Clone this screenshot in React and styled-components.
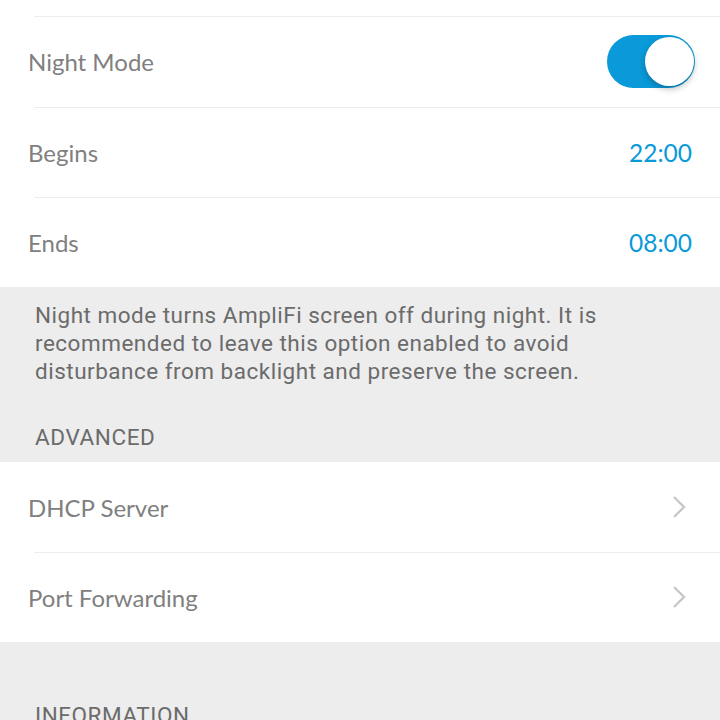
import React from "react";
import styled, { createGlobalStyle } from "styled-components";

const Global = createGlobalStyle`
  body {
    margin: 0;
    background: #ededed;
    font-family: "Lato", "Liberation Sans", sans-serif;
  }
`;

const Page = styled.div`
  width: 720px;
  height: 720px;
  overflow: hidden;
  background: #ededed;
`;

const Group = styled.div`
  background: #fff;
  padding-top: ${(p) => p.$top || 0}px;
`;

const Row = styled.div`
  height: ${(p) => p.$h || 90}px;
  display: flex;
  align-items: center;
  justify-content: space-between;
  padding: 0 ${(p) => p.$pr || 28}px 0 28px;
  box-sizing: border-box;
  position: relative;

  &::before {
    content: "";
    display: ${(p) => (p.$line ? "block" : "none")};
    position: absolute;
    top: 0;
    left: 34px;
    right: 0;
    height: 1px;
    background: #ececec;
  }
`;

const Label = styled.span`
  font-size: 24px;
  color: #808080;
`;

const Value = styled.span`
  font-size: 24.5px;
  color: #0a9ad9;
`;

const Track = styled.div`
  width: 88px;
  height: 53px;
  border-radius: 27px;
  background: #0a9ad9;
  position: relative;
  margin-right: -3px;
`;

const Knob = styled.div`
  position: absolute;
  top: 2px;
  right: 1px;
  width: 49px;
  height: 49px;
  border-radius: 50%;
  background: #fff;
  box-shadow: 0 3px 6px rgba(0, 0, 0, 0.25);
`;

const Note = styled.p`
  margin: 0;
  padding: 14px 40px 0 35px;
  font-family: "Roboto", "Liberation Sans", sans-serif;
  font-size: 22.5px;
  letter-spacing: 0.5px;
  line-height: 28px;
  color: #6b6b6b;
`;

const Header = styled.div`
  padding: 0 35px;
  font-family: "Roboto", "Liberation Sans", sans-serif;
  font-size: 22.5px;
  letter-spacing: 0.6px;
  color: #6b6b6b;
  height: ${(p) => p.$h}px;
  display: flex;
  align-items: flex-end;
  padding-bottom: ${(p) => p.$pb}px;
  box-sizing: border-box;
`;

const Chevron = () => (
  <svg width="14" height="24" viewBox="0 0 14 24">
    <path d="M2 2 L12 12 L2 22" fill="none" stroke="#c7c7cc" strokeWidth="2.4" />
  </svg>
);

export default function App() {
  return (
    <Page>
      <Global />
      <Group $top={16}>
        <Row $line $h={91}>
          <Label>Night Mode</Label>
          <Track>
            <Knob />
          </Track>
        </Row>
        <Row $line>
          <Label>Begins</Label>
          <Value>22:00</Value>
        </Row>
        <Row $line>
          <Label>Ends</Label>
          <Value>08:00</Value>
        </Row>
      </Group>
      <Note>
        Night mode turns AmpliFi screen off during night. It is recommended to leave this option
        enabled to avoid disturbance from backlight and preserve the screen.
      </Note>
      <Header $h={77} $pb={12}>ADVANCED</Header>
      <Group>
        <Row $pr={34}>
          <Label>DHCP Server</Label>
          <Chevron />
        </Row>
        <Row $line $pr={34}>
          <Label>Port Forwarding</Label>
          <Chevron />
        </Row>
      </Group>
      <Header $h={86} $pb={0}>INFORMATION</Header>
    </Page>
  );
}
